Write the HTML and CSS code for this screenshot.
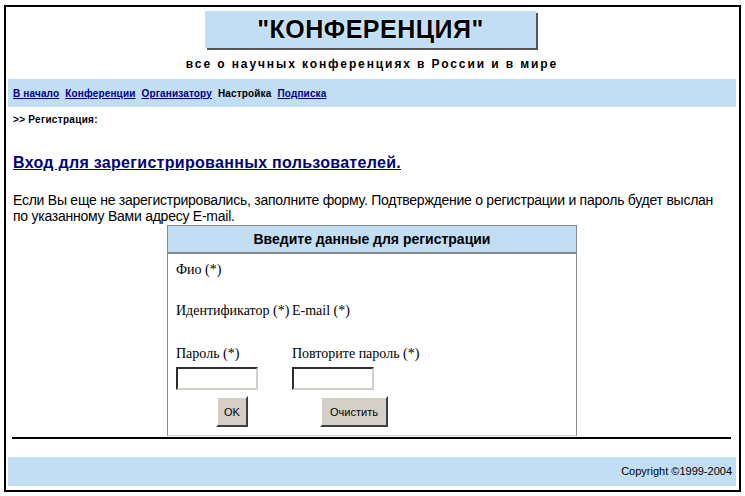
FILE: index.html
```html
<!DOCTYPE html>
<html lang="ru">
  <head>
    <meta charset="UTF-8" />
    <title>Конференция - Регистрация</title>
    <link rel="stylesheet" href="styles.css">
  </head>
  <body>
    <div class="page">
      <div class="header">
        <div class="logo">"КОНФЕРЕНЦИЯ"</div>
        <div class="tagline">все о научных конференциях в России и в мире</div>
      </div>

      <div class="nav">
        <a href="#">В начало</a>
        <a href="#">Конференции</a>
        <a href="#">Организатору</a>
        <span>Настройка</span>
        <a href="#">Подписка</a>
      </div>

      <div class="crumb">&gt;&gt; Регистрация:</div>

      <h1 class="title"><a href="#">Вход для зарегистрированных пользователей.</a></h1>

      <p class="intro">
        Если Вы еще не зарегистрировались, заполните форму. Подтверждение о регистрации и пароль будет выслан<br>
        по указанному Вами адресу E-mail.
      </p>

      <div class="reg-form">
        <div class="reg-head">Введите данные для регистрации</div>
        <div class="reg-body">
          <div class="row-fio">Фио (*)</div>
          <div class="row-id">Идентификатор (*)</div>
          <div class="row-id">E-mail (*)</div>
          <div class="row-pass">Пароль (*)</div>
          <div class="row-pass">Повторите пароль (*)</div>
          <input type="password" class="field" />
          <input type="password" class="field" />
          <button class="btn btn-ok">OK</button>
          <button class="btn btn-clear">Очистить</button>
        </div>
      </div>

      <div class="rule"></div>

      <div class="footer">Copyright ©1999-2004</div>
    </div>
  </body>
</html>
```

FILE: styles.css
```css
/* базовые */
* {
  box-sizing: border-box;
}

body {
  margin: 0;
  font-family: "Liberation Sans", Arial, sans-serif;
  color: #000;
  background: #fff;
}

/* рамка страницы */
.page {
  width: 737px;
  margin: 5px 0 0 4px;
  border: 2px solid #000;
  padding: 0 3px 4px 2px;
}

/* шапка */
.header {
  padding-top: 4px;
}

.logo {
  width: 331px;
  height: 37px;
  margin: 0 auto 0 197px;
  background: #c1def5;
  box-shadow: 2px 2px 0 #555;
  text-align: center;
  font-size: 25px;
  font-weight: bold;
  line-height: 37px;
  letter-spacing: 0.5px;
  text-shadow: 0 0 2px #fff;
}

.tagline {
  margin-top: 9px;
  text-align: center;
  font-size: 12px;
  font-weight: bold;
  line-height: 14px;
  letter-spacing: 1.9px;
}

/* меню */
.nav {
  margin-top: 8px;
  height: 28px;
  padding: 0 5px;
  display: flex;
  align-items: center;
  gap: 6px;
  background: #c1def5;
  font-size: 10px;
  font-weight: bold;
  letter-spacing: 0.15px;
}

.nav a {
  color: #000080;
}

.crumb {
  margin-top: 6px;
  padding-left: 5px;
  font-size: 10px;
  font-weight: bold;
  line-height: 14px;
  letter-spacing: 0.3px;
}

.title {
  margin: 26px 0 0 5px;
  font-size: 16px;
  line-height: 20px;
  letter-spacing: 0.3px;
}

.title a {
  color: #000080;
}

.intro {
  margin: 19px 0 0 5px;
  font-size: 14px;
  line-height: 16px;
  letter-spacing: -0.25px;
}

/* форма регистрации */
.reg-form {
  width: 410px;
  margin: 1px 0 0 159px;
  border: 1px solid #888;
  border-bottom-color: #ccc;
}

.reg-head {
  height: 28px;
  background: #c1def5;
  border-bottom: 2px solid #888;
  text-align: center;
  font-size: 14px;
  font-weight: bold;
  line-height: 27px;
}

.reg-body {
  display: grid;
  grid-template-columns: 116px 1fr;
  padding: 8px 0 8px 8px;
  font-family: "Liberation Serif", "Times New Roman", serif;
  font-size: 14px;
  line-height: 16px;
}

.row-fio {
  grid-column: 1 / 3;
}

.row-id {
  margin-top: 25px;
}

.row-pass {
  margin-top: 27px;
}

.field {
  width: 82px;
  height: 23px;
  margin-top: 5px;
  border: 2px inset #d4d0c8;
  border-top-color: #808080;
  border-left-color: #808080;
  background: #fff;
}

.btn {
  height: 31px;
  margin-top: 6px;
  background: #d4d0c8;
  border: 2px solid;
  border-color: #fff #404040 #404040 #fff;
  font-family: "Liberation Sans", Arial, sans-serif;
  font-size: 11px;
  padding: 0;
}

.btn-ok {
  width: 32px;
  margin-left: 40px;
}

.btn-clear {
  width: 68px;
  margin-left: 28px;
}

/* низ */
.rule {
  height: 2px;
  margin: 1px 5px 0 4px;
  background: #000;
}

.footer {
  margin-top: 18px;
  height: 29px;
  padding-right: 4px;
  background: #c1def5;
  text-align: right;
  font-size: 11px;
  line-height: 29px;
}
```
